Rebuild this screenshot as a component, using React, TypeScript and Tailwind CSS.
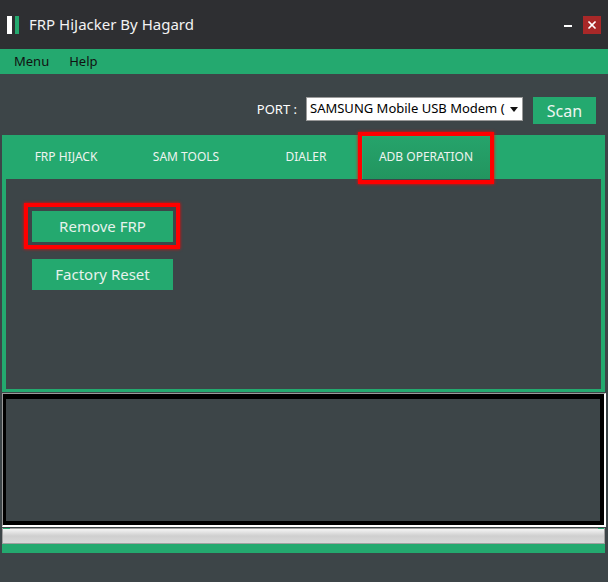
import { X } from "lucide-react";

const font = { fontFamily: '"Noto Sans", "Open Sans", sans-serif' };

const tabs = ["FRP HIJACK", "SAM TOOLS", "DIALER", "ADB OPERATION"];

export default function App() {
  return (
    <div className="w-[608px] h-[582px] bg-[#3d4548] flex flex-col overflow-hidden" style={font}>
      {/* title bar */}
      <div className="h-[49px] bg-[#2e2f32] flex items-center shrink-0">
        <div className="flex gap-[3px] ml-[7px]">
          <span className="w-[5px] h-[18px] bg-white" />
          <span className="w-[4px] h-[18px] bg-[#24a96f]" />
        </div>
        <span className="ml-[10px] text-[15px] text-[#f2f2f2]">FRP HiJacker By Hagard</span>
        <div className="ml-auto mr-[7px] flex items-center">
          <span className="w-[8px] h-[2px] bg-white mt-[2px]" />
          <span className="ml-[11px] w-[18px] h-[18px] bg-[#a82828] flex items-center justify-center">
            <X size={12} strokeWidth={3.5} className="text-white" />
          </span>
        </div>
      </div>

      {/* menu bar */}
      <div className="h-[25px] bg-[#24a96f] flex items-center gap-[20px] pl-[14px] text-[13px] text-[#111] shrink-0">
        <span>Menu</span>
        <span>Help</span>
      </div>

      {/* port row */}
      <div className="flex items-start justify-end pr-[12px] pt-[23px] shrink-0">
        <span className="text-[13px] text-white mt-[3px] mr-[9px]">PORT :</span>
        <div className="w-[217px] h-[24px] bg-white border border-[#9a9a9a] flex items-center pl-[3px] pr-[4px] overflow-hidden">
          <span className="text-[13px] text-black whitespace-nowrap overflow-hidden flex-1">SAMSUNG Mobile USB Modem (</span>
          <svg width="8" height="5" viewBox="0 0 8 5" className="ml-[3px] shrink-0">
            <path d="M0 0h8L4 5z" fill="#111" />
          </svg>
        </div>
        <div className="ml-[10px] w-[63px] h-[27px] bg-[#24a96f] flex items-center justify-center text-[16px] text-[#eef5f1]">
          Scan
        </div>
      </div>

      {/* tab control */}
      <div className="mt-[11px] ml-[2px] mr-[3px] bg-[#24a96f] px-[4px] pb-[3px] flex flex-col shrink-0">
        <div className="h-[44px] flex">
          {tabs.map((t, i) => (
            <div key={t} className="relative w-[120px] flex items-center justify-center text-[12px] text-[#eef4f0]">
              {i === 3 && (
                <>
                  <div className="absolute left-[-3px] right-[-4px] top-[2px] bottom-0 bg-gradient-to-b from-[#26a36b] to-[#22955f]" />
                  <div className="absolute left-[-8px] right-[-8px] top-[-3px] bottom-[-5px] border-[4px] border-[#ff0000] shadow-[0_0_3px_#ff0000]" />
                </>
              )}
              <span className="relative">{t}</span>
            </div>
          ))}
        </div>
        <div className="h-[210px] bg-[#3d4548] flex flex-col items-start pl-[26px] pt-[32px]">
          <div className="relative">
            <div className="absolute left-[-8px] right-[-7px] top-[-8px] bottom-[-7px] border-[4px] border-[#ff0000] shadow-[0_0_3px_#ff0000]" />
            <div className="relative w-[141px] h-[31px] bg-[#24a96f] flex items-center justify-center text-[15px] text-[#e6f2ec]">
              Remove FRP
            </div>
          </div>
          <div className="mt-[17px] w-[141px] h-[31px] bg-[#24a96f] flex items-center justify-center text-[15px] text-[#e6f2ec]">
            Factory Reset
          </div>
        </div>
      </div>

      {/* log box */}
      <div className="mt-[1px] ml-[2px] mr-[2px] h-[134px] border-t border-l border-[#9a9a9a] border-r-[2px] border-b-[2px] border-r-white border-b-white shrink-0">
        <div className="h-full border-[4px] border-l-[3px] border-t-[5px] border-black bg-[#3d4548]" />
      </div>

      {/* progress bar */}
      <div className="mt-[1px] ml-[2px] mr-[3px] h-[16px] relative border border-[#a0a0a0] bg-gradient-to-b from-[#f4f4f4] via-[#cfcfcf] to-[#d8d8d8] shrink-0">
        <span className="absolute left-0 top-[-1px] w-[7px] h-[1px] bg-[#24a96f]" />
        <span className="absolute right-0 top-[-1px] w-[6px] h-[1px] bg-[#24a96f]" />
      </div>
      <div className="ml-[2px] mr-[3px] h-[9px] bg-[#24a96f] shrink-0" />
    </div>
  );
}
